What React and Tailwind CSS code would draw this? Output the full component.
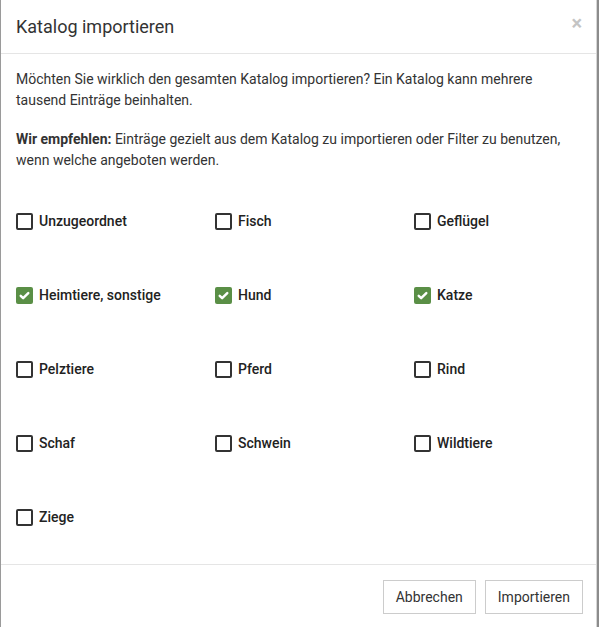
import React, { useState } from "react";

const options = [
  { name: "Unzugeordnet", checked: false },
  { name: "Fisch", checked: false },
  { name: "Geflügel", checked: false },
  { name: "Heimtiere, sonstige", checked: true },
  { name: "Hund", checked: true },
  { name: "Katze", checked: true },
  { name: "Pelztiere", checked: false },
  { name: "Pferd", checked: false },
  { name: "Rind", checked: false },
  { name: "Schaf", checked: false },
  { name: "Schwein", checked: false },
  { name: "Wildtiere", checked: false },
  { name: "Ziege", checked: false },
];

const Checkbox = ({ checked }) =>
  checked ? (
    <span className="flex items-center justify-center w-[17px] h-[17px] rounded-[2px] bg-[#5a8f46]">
      <svg viewBox="0 0 24 24" className="w-[13px] h-[13px]" fill="none" stroke="white" strokeWidth={4.5} strokeLinecap="round" strokeLinejoin="round">
        <path d="M5 12.5l4.5 4.5L19 7.5" />
      </svg>
    </span>
  ) : (
    <span className="block w-[17px] h-[17px] rounded-[2px] border-2 border-[#333]"></span>
  );

export default function App() {
  const [items, setItems] = useState(options);

  return (
    <div className="flex w-[600px] h-[627px] bg-white font-['Roboto',sans-serif] text-[#333] overflow-hidden">
      <div className="flex flex-col w-[597px] h-[660px] border-l border-[#9a9a9a] border-r border-r-[#d6d6d6] bg-white">
        <div className="flex items-center justify-between h-[54px] pl-[15px] pr-[14px] border-b border-[#e5e5e5]">
          <h4 className="text-[18px] text-[#333] leading-none">Katalog importieren</h4>
          <span className="text-[20px] font-bold text-[#c4c4c4] leading-none -mt-2">×</span>
        </div>
        <div className="pl-[15px] pt-[15px] text-[14px] leading-[21px]">
          <p className="pr-[15px]">
            Möchten Sie wirklich den gesamten Katalog importieren? Ein Katalog kann mehrere
            tausend Einträge beinhalten.
          </p>
          <p className="mt-[18px] pr-[15px]">
            <b className="font-bold">Wir empfehlen:</b> Einträge gezielt aus dem Katalog zu importieren oder Filter zu benutzen,
            wenn welche angeboten werden.
          </p>
          <div className="grid grid-cols-[199px_199px_180px] gap-y-[54px] mt-[40px] pb-[37px]">
            {items.map((item, i) => (
              <label
                key={item.name}
                className="flex items-center gap-[6px] h-[20px] cursor-pointer"
                onClick={() =>
                  setItems(items.map((x, j) => (j === i ? { ...x, checked: !x.checked } : x)))
                }
              >
                <Checkbox checked={item.checked} />
                <span className="font-medium text-[14px] text-[#222]">{item.name}</span>
              </label>
            ))}
          </div>
        </div>
        <div className="flex justify-end gap-[9px] border-t border-[#e5e5e5] pt-[15px] pr-[13px]">
          <button className="h-[34px] px-[12px] border border-[#ccc] text-[14px] text-[#333] bg-white">
            Abbrechen
          </button>
          <button className="h-[34px] px-[12px] border border-[#ccc] text-[14px] text-[#333] bg-white">
            Importieren
          </button>
        </div>
      </div>
      <div className="w-[2px] bg-[#8c8c8c]"></div>
    </div>
  );
}
